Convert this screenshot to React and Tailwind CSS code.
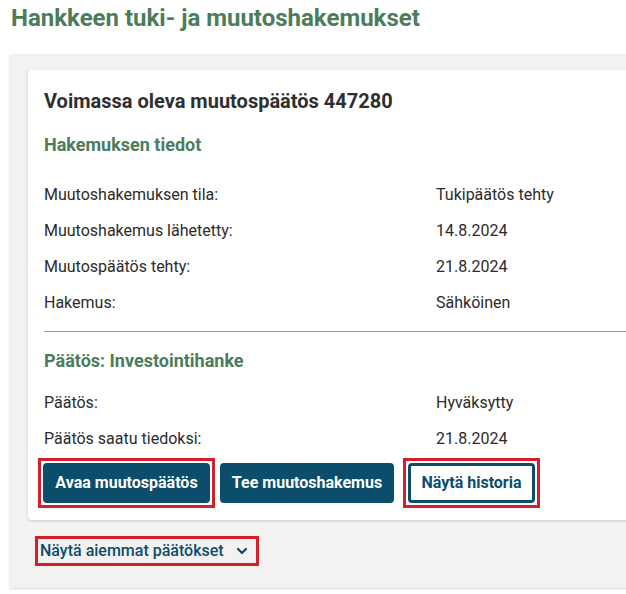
import React from 'react';

const Row = ({ label, value }) => (
  <div className="flex h-9 items-center">
    <span className="w-[392px] shrink-0">{label}</span>
    <span>{value}</span>
  </div>
);

export default function App() {
  return (
    <div className="w-[626px] h-[594px] overflow-hidden bg-white text-[#2b2b2b]" style={{ fontFamily: 'Roboto, "Liberation Sans", sans-serif' }}>
      <h1 className="pl-[11px] pt-[3px] text-[24px] font-bold leading-[30px] text-[#4c7c5c]">
        Hankkeen tuki- ja muutoshakemukset
      </h1>

      {/* gray panel */}
      <div className="ml-[10px] mt-[21px] w-[640px] h-[534px] bg-[#f3f2f1] pl-[18px] pt-[16px] shadow-[0_1px_2px_rgba(0,0,0,0.15)]">
        {/* white card */}
        <div className="w-[640px] rounded-l-[4px] bg-white pl-4 pt-[18px] pb-[12px] shadow-[0_1px_3px_rgba(0,0,0,0.18)]">
          <h2 className="text-[20px] font-bold leading-[26px] text-[#2f2f2f]">
            Voimassa oleva muutospäätös 447280
          </h2>
          <h3 className="mt-[19px] text-[18px] font-bold leading-[24px] text-[#4c7c5c]">
            Hakemuksen tiedot
          </h3>
          <div className="mt-[20px] text-[16px]">
            <Row label="Muutoshakemuksen tila:" value="Tukipäätös tehty" />
            <Row label="Muutoshakemus lähetetty:" value="14.8.2024" />
            <Row label="Muutospäätös tehty:" value="21.8.2024" />
            <Row label="Hakemus:" value="Sähköinen" />
          </div>
          <div className="mt-[10px] h-px bg-[#9a9a9a]" />
          <h3 className="mt-[17px] text-[18px] font-bold leading-[24px] text-[#4c7c5c]">
            Päätös: Investointihanke
          </h3>
          <div className="mt-[12px] text-[16px]">
            <Row label="Päätös:" value="Hyväksytty" />
            <Row label="Päätös saatu tiedoksi:" value="21.8.2024" />
          </div>
          <div className="mt-[1px] flex items-center text-[16px] font-bold">
            <div className="-ml-[6px] border-[3px] border-[#d3202c] p-[2px]">
              <button className="h-[40px] w-[167px] rounded-[4px] bg-[#0b4d6b] text-white">Avaa muutospäätös</button>
            </div>
            <button className="ml-[5px] h-[40px] w-[174px] rounded-[4px] bg-[#0b4d6b] text-white">Tee muutoshakemus</button>
            <div className="ml-[9px] border-[3px] border-[#d3202c] p-[2px]">
              <button className="h-[40px] w-[127px] rounded-[4px] border-[3px] border-[#0b4d6b] bg-white text-[#0b4d6b]">Näytä historia</button>
            </div>
          </div>
        </div>

        <div className="ml-[7px] mt-[16px] inline-flex h-[30px] items-center gap-[12px] border-[3px] border-[#d3202c] pl-[2px] pr-[8px] text-[16px] font-medium text-[#0b4d6b]">
          <span>Näytä aiemmat päätökset</span>
          <svg width="12" height="8" viewBox="0 0 12 8" fill="none" stroke="#0b4d6b" strokeWidth="2.2" strokeLinecap="round" strokeLinejoin="round">
            <path d="M2 2l4 4 4-4" />
          </svg>
        </div>
      </div>
    </div>
  );
}
